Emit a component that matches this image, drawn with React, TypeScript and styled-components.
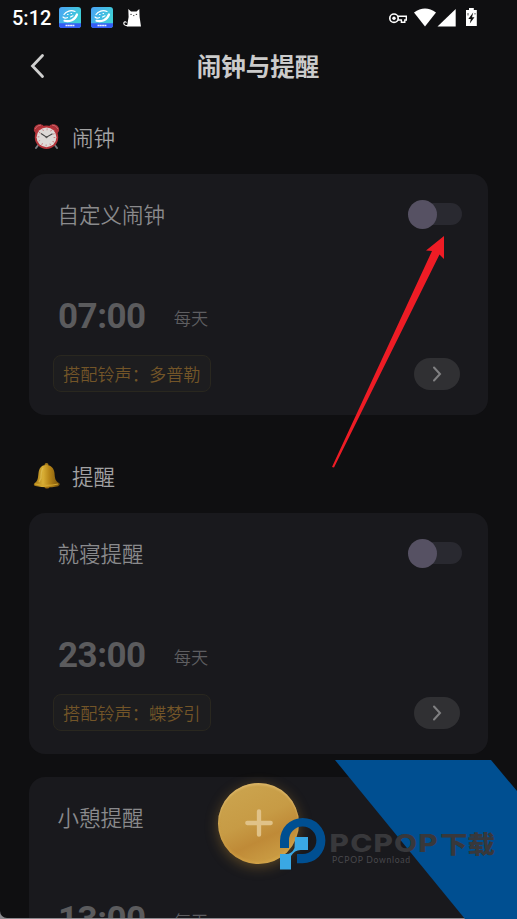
import React from "react";
import styled, { createGlobalStyle } from "styled-components";

const GlobalStyle = createGlobalStyle`
  *, *::before, *::after { box-sizing: border-box; }
  body { margin: 0; background: #8c8a8f; }
  button { border: 0; padding: 0; font: inherit; }
`;

const Screen = styled.main`
  position: relative;
  width: 517px;
  height: 919px;
  overflow: hidden;
  background: #8c8a8f;
  font-family: "Noto Sans CJK SC", sans-serif;
`;

const Page = styled.div`
  height: 918px;
  overflow: hidden;
  background: #0f0f11;
  border-bottom-left-radius: 7px;
`;

const StatusBar = styled.header`
  display: flex;
  align-items: center;
  height: 35px;
  padding: 0 39px 0 12px;
`;

const Clock = styled.span`
  width: 47px;
  padding-top: 1px;
  font: 500 20px/35px Roboto, sans-serif;
  color: #fff;
  white-space: nowrap;
`;

const AppIcons = styled.div`
  display: flex;
  align-items: center;
  gap: 10px;
  flex: 1;
`;

const SystemIcons = styled.div`
  display: flex;
  align-items: center;
`;

const TitleBar = styled.div`
  display: grid;
  grid-template-columns: 60px 1fr 60px;
  align-items: center;
  height: 61px;
`;

const BackButton = styled.button`
  display: flex;
  padding-left: 30px;
  background: none;
`;

const Title = styled.h1`
  margin: 0 0 0 -1px;
  padding-top: 1px;
  text-align: center;
  font-size: 24.5px;
  line-height: 60px;
  font-weight: 700;
  color: #cbcbcb;
`;

const Section = styled.section<{ $top: number }>`
  padding: ${(p) => p.$top}px 29px 0;
`;

const SectionTitle = styled.h2`
  display: flex;
  align-items: center;
  gap: 12px;
  height: 42px;
  margin: 0 0 17px;
  padding-left: 4px;
  font-size: 21.5px;
  font-weight: 350;
  color: #a2a2a3;
`;

const Card = styled.article`
  display: flex;
  flex-direction: column;
  height: 241px;
  margin-bottom: 23px;
  padding: 20px 26px 22px 24px;
  border-radius: 16px;
  background: #19191d;
`;

const Row = styled.div`
  display: flex;
  align-items: center;
  justify-content: space-between;
`;

const CardName = styled.span`
  padding-left: 4.5px;
  font-size: 21.5px;
  line-height: 40px;
  font-weight: 350;
  color: #8a8a8c;
`;

const Toggle = styled.button`
  display: flex;
  align-items: center;
  width: 51px;
  height: 22px;
  border-radius: 11px;
  background: #292930;
`;

const Knob = styled.span`
  flex: none;
  width: 29px;
  height: 29px;
  margin-left: -3px;
  border-radius: 50%;
  background: #565163;
`;

const TimeRow = styled.div`
  display: flex;
  align-items: center;
  gap: 28px;
  height: 44px;
  margin: 61px 0 16px;
  padding-left: 5px;
`;

const Time = styled.span`
  font: 700 35px/44px Roboto, sans-serif;
  letter-spacing: -0.5px;
  color: #5b5b5d;
`;

const Repeat = styled.span`
  padding-top: 1px;
  font-size: 17.2px;
  line-height: 27px;
  font-weight: 350;
  color: #5e5e61;
`;

const Ringtone = styled.span`
  width: 158px;
  height: 37px;
  border: 1px solid #29271f;
  border-radius: 8px;
  background: #1d1d1f;
  padding-left: 9px;
  font-size: 17.2px;
  line-height: 35px;
  font-weight: 350;
  white-space: nowrap;
  color: #735528;
`;

const DetailButton = styled.button`
  display: flex;
  align-items: center;
  justify-content: center;
  width: 46px;
  height: 32px;
  margin-right: 2px;
  border-radius: 16px;
  background: #303033;
`;

const AddButton = styled.button`
  position: absolute;
  left: 218px;
  top: 782.5px;
  display: flex;
  align-items: center;
  justify-content: center;
  width: 81px;
  height: 81px;
  border-radius: 50%;
  background: linear-gradient(155deg, #cca54f 5%, #c79b45 45%, #bf8a37 65%, #cda147 92%);
  box-shadow: 0 3px 13px rgba(190, 140, 50, 0.4), inset 0 2px 2px rgba(235, 200, 125, 0.5),
    inset 0 -2px 3px rgba(225, 178, 80, 0.4);
`;

const Overlay = styled.svg`
  position: absolute;
  inset: 0;
  pointer-events: none;
`;

function AppBadge() {
  return (
    <svg width="22" height="21" viewBox="0 0 22 21">
      <defs>
        <linearGradient id="badge" x1="0" x2="1" y2=".5">
          <stop stopColor="#4aa2f5" />
          <stop offset="1" stopColor="#3fd0d6" />
        </linearGradient>
        <clipPath id="badgeClip"><rect width="22" height="21" rx="3" /></clipPath>
      </defs>
      <g clipPath="url(#badgeClip)">
        <rect width="22" height="21" fill="url(#badge)" />
        <path d="M0 16.3h22V21H0z" fill="#345cf5" />
        <g fill="none" stroke="#fff" strokeLinecap="round">
          <path d="M5 7.5C7 4 12 2.800 16 4.500" strokeWidth="1.200" />
          <path d="M5.500 13.800c5 1.200 10.500-.8 12.500-6.300" strokeWidth="2.200" />
          <path d="M4 10q2 2 4.500.5M8.500 7.500h.6M12 6.500h.6M11.500 10l2.500-1.300" strokeWidth="1.100" />
        </g>
        <path d="M6.500 18.500h9" stroke="#e9eeff" strokeWidth="1.500" strokeDasharray="2 .3" />
      </g>
    </svg>
  );
}

function CatIcon() {
  return (
    <svg width="19" height="18" viewBox="0 0 19 18">
      <path d="M5.300 0 8 2.600h5.500L16.300 0l.3 8 1.400 9.500H4L5.600 8z" fill="#fff" />
      <path d="M5 16.500c-3 .5-4.700-1-4-3 .5-1.200 2.200-1 2.300.2" fill="none" stroke="#fff" strokeWidth="1.100" />
      <path d="M7.400 5.400h1.300M12.800 5.400h1.300M10.200 6.600h1.100" stroke="#333" strokeWidth="1" />
    </svg>
  );
}

function StatusIcons() {
  return (
    <svg width="90" height="24" viewBox="388 5.500 90 24" fill="#fff">
      <path d="M398 15.800h8.300v3.700h-1.500v2.300h-3.400v-2.300H398" fill="none" stroke="#fff" strokeWidth="1.400" />
      <circle cx="394" cy="17.700" r="4.200" fill="#0f0f11" stroke="#fff" strokeWidth="1.600" />
      <circle cx="394" cy="17.700" r="1.700" />
      <path d="M414 12q11-8 22 0l-11 14z" />
      <path d="M437.500 26 455.700 8.500V26z" />
      <path d="M469 7.500h4.800v2h3V25.500h-10.800v-16h3z" />
      <path d="m473.200 12-4.900 6.400h2.500l-1 4.600 4.700-6.300H472z" fill="#111" />
      <path d="M468 12.500v2.500M475 12.500v1.500" stroke="#555" />
    </svg>
  );
}

function AlarmEmoji() {
  return (
    <svg width="27" height="27" viewBox="0 0 27 27">
      <path d="m6 21-3 4M21 21l3 4" stroke="#777b80" strokeWidth="2" strokeLinecap="round" />
      <path d="M1 8C0 3 5-.5 10 2l1 2-8 7zM26 8c1-5-4-8.500-9-6l-1 2 8 7z" fill="#a93239" />
      <path d="M2 6Q4 2 8 2M25 6q-2-4-6-4" stroke="#d1656a" fill="none" />
      <circle cx="13.500" cy="14.300" r="11.700" fill="#b5333a" />
      <circle cx="13.500" cy="14.300" r="9.900" fill="#ddd9d7" />
      <circle cx="13.500" cy="14.300" r="8" fill="none" stroke="#c1666a" strokeWidth="1.700" strokeDasharray=".7 3.489" />
      <path d="m8 10.500 5.500 3.700 6-3.500" fill="none" stroke="#444" strokeWidth="1.100" />
      <circle cx="13.500" cy="14.300" r="1" fill="#555" />
    </svg>
  );
}

function BellEmoji() {
  return (
    <svg width="27" height="27" viewBox="0 -1 27 27">
      <defs>
        <linearGradient id="bell">
          <stop stopColor="#9c7012" />
          <stop offset=".35" stopColor="#d9af35" />
          <stop offset=".6" stopColor="#b78517" />
          <stop offset="1" stopColor="#74500c" />
        </linearGradient>
      </defs>
      <circle cx="13.500" cy="2" r="2" fill="#a47a1a" />
      <circle cx="14" cy="23" r="2.600" fill="#91620e" />
      <path d="M13 2c5 0 8 3 8.500 8 .4 5 .6 8 4.500 10 1.500 1 .5 3-2 3.400Q13 25.500 2.500 23C.5 22.500.3 20.800 2 19.800 5 18 5 14 5.500 10 6 5 8.500 2 13 2z" fill="url(#bell)" />
      <path d="M2 20.800q11.500 3 23 .2" stroke="#d2a52e" strokeWidth="1.200" fill="none" />
      <path d="M10 5q-2 3-2 10l-2 4" stroke="#e5c45b" strokeWidth="1.300" fill="none" opacity=".6" />
    </svg>
  );
}

interface AlarmProps {
  name: string;
  time: string;
  ringtone: string;
}

function AlarmCard({ name, time, ringtone }: AlarmProps) {
  return (
    <Card>
      <Row>
        <CardName>{name}</CardName>
        <Toggle aria-label={name}><Knob /></Toggle>
      </Row>
      <TimeRow>
        <Time>{time}</Time>
        <Repeat>每天</Repeat>
      </TimeRow>
      <Row>
        <Ringtone>搭配铃声：{ringtone}</Ringtone>
        <DetailButton>
          <svg width="10" height="16" viewBox="0 0 10 16">
            <path d="m2 1.500 6 6.500-6 6.500" fill="none" stroke="#808082" strokeWidth="2" strokeLinecap="round" />
          </svg>
        </DetailButton>
      </Row>
    </Card>
  );
}

function Watermark() {
  return (
    <Overlay width="517" height="919" viewBox="0 0 517 919">
      <path d="M335 760H491L517 791V919H465z" fill="#004f91" />
      <path d="M280 848V840.700A22.700 22.700 0 1 1 302.700 863.300H297V854h5.700A13.700 13.700 0 1 0 289 840.700V848z" fill="#004f91" />
      <path d="M295 837h13v13h-7.500q-6 0-9.500 6v13.500h-11V854h6q6 0 8.500-6z" fill="#3aa8e4" />
      <g fill="#38383b" fontFamily='"Noto Sans CJK SC", sans-serif'>
        <text x="329.500" y="852" fontFamily="Inter, sans-serif" fontWeight="800" fontSize="24.500" letterSpacing="1" textLength="109.500" lengthAdjust="spacingAndGlyphs">PCPOP</text>
        <text x="440" y="853" fontWeight="900" fontSize="24" textLength="55" lengthAdjust="spacingAndGlyphs">下载</text>
      </g>
      <text x="332" y="863" fill="#48484c" fontFamily="Lato, sans-serif" fontSize="8.600" textLength="78">PCPOP Download</text>
    </Overlay>
  );
}

export default function App() {
  return (
    <Screen>
      <GlobalStyle />
      <Page>
        <StatusBar>
          <Clock>5:12</Clock>
          <AppIcons><AppBadge /><AppBadge /><CatIcon /></AppIcons>
          <SystemIcons><StatusIcons /></SystemIcons>
        </StatusBar>
        <TitleBar>
          <BackButton aria-label="返回">
            <svg width="16" height="26" viewBox="0 0 16 26">
              <path d="M12.500 2.500 2.500 13l10 10.500" fill="none" stroke="#cfcfcf" strokeWidth="2.800" strokeLinecap="round" />
            </svg>
          </BackButton>
          <Title>闹钟与提醒</Title>
        </TitleBar>
        <Section $top={19}>
          <SectionTitle><AlarmEmoji />闹钟</SectionTitle>
          <AlarmCard name="自定义闹钟" time="07:00" ringtone="多普勒" />
        </Section>
        <Section $top={16.4}>
          <SectionTitle><BellEmoji />提醒</SectionTitle>
          <AlarmCard name="就寝提醒" time="23:00" ringtone="蝶梦引" />
          <AlarmCard name="小憩提醒" time="13:00" ringtone="多普勒" />
        </Section>
      </Page>
      <AddButton aria-label="添加">
        <svg width="28" height="28" viewBox="0 0 28 28">
          <path d="M14 2.300v23.400M2.300 14h23.400" stroke="#e0c288" strokeWidth="4.300" strokeLinecap="round" />
        </svg>
      </AddButton>
      <Watermark />
      <Overlay width="517" height="919" viewBox="0 0 517 919">
        <path d="m332 467 100-216-6-.500 18-14.500v23l-4.500-4.500L334 467.500z" fill="#ee1c25" />
      </Overlay>
    </Screen>
  );
}
